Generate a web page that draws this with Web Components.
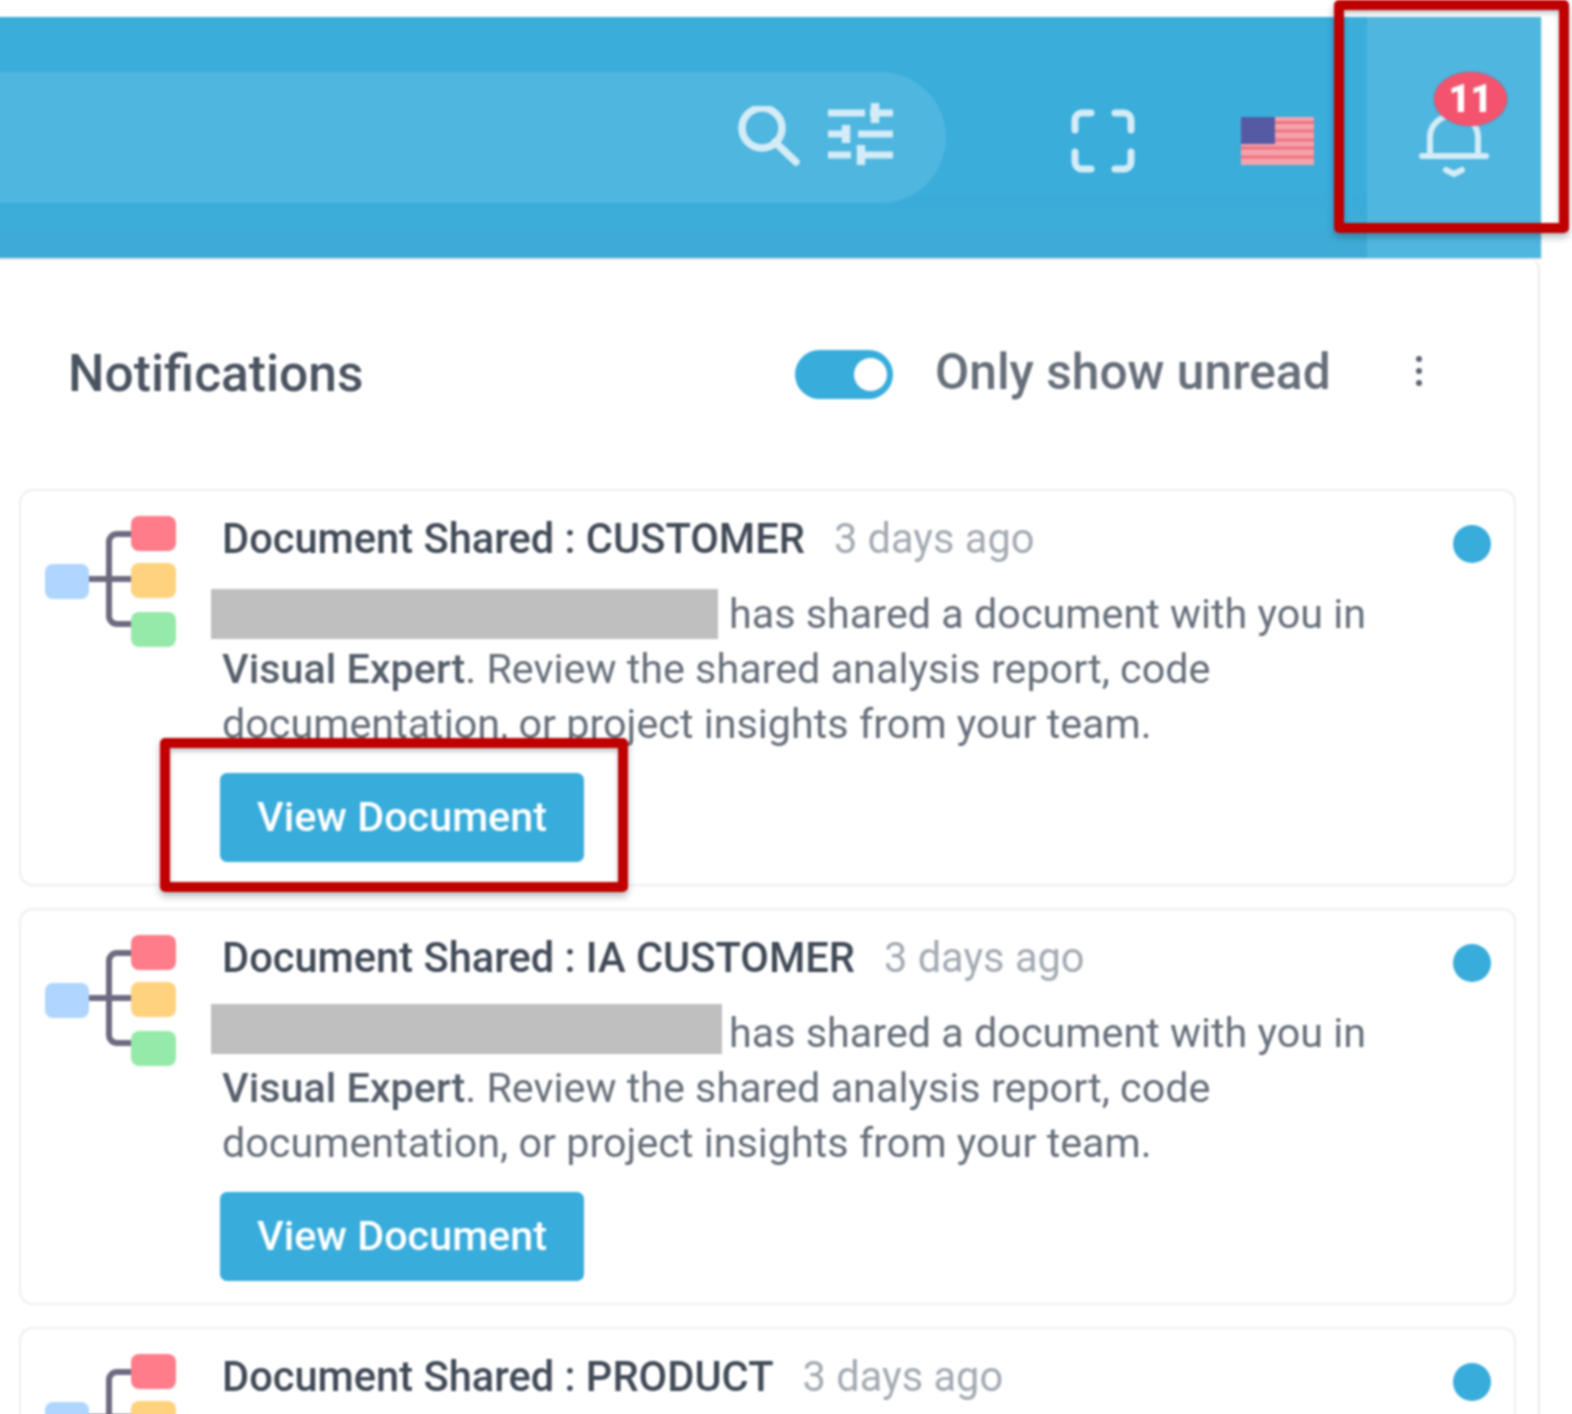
<!DOCTYPE html>
<html lang="en"><head><meta charset="utf-8"><title>Notifications</title>
<style>
html,body{margin:0;padding:0;background:#fff}
body{width:1572px;height:1414px;overflow:hidden;position:relative;font-family:Roboto,"Liberation Sans",sans-serif}
#page{filter:blur(.8px);width:1576px;height:1420px;margin-left:-4px;overflow:hidden;position:relative;padding:17px 0 0 4px;box-sizing:border-box}
</style></head><body>
<div id="page">
<top-bar></top-bar>
<notif-panel>
<notif-card title-text="Document Shared : CUSTOMER" redact="507" lift="0"></notif-card>
<notif-card title-text="Document Shared : IA CUSTOMER" redact="511" lift="4"></notif-card>
<notif-card title-text="Document Shared : PRODUCT" redact="507" lift="0"></notif-card>
</notif-panel>
<mark-box style="left:1338px;top:0;width:235px;height:233px"></mark-box>
<mark-box style="left:164px;top:738px;width:468px;height:154px"></mark-box>
</div>
<script>
function def(name,html,init){customElements.define(name,class extends HTMLElement{constructor(){super();this.attachShadow({mode:'open'}).innerHTML=html;}connectedCallback(){if(init)init(this)}})}
const ic='fill="none" stroke="#d3ecf7" stroke-linecap="round"';
def('top-bar',`<style>
:host{display:flex;align-items:center;box-sizing:border-box;height:241px;background:linear-gradient(#3aaddb,#3aaddb 70%,#3fabd6);box-shadow:0 1px 2px rgba(90,120,140,.3);margin-left:-4px;padding-left:4px;width:1545px}
.pill{height:131px;box-sizing:border-box;background:#4fb6df;border-radius:0 66px 66px 0;display:flex;align-items:center;justify-content:flex-end;padding-right:53px;gap:28px;flex:none;margin-left:-4px;width:950px}
svg{display:block;flex:none}
.s{margin-bottom:3px}.t{margin-bottom:7px}
.full{margin-left:125px;margin-top:7px}.flag{margin-left:106px;margin-top:6px}
.bell{margin-left:53px;width:174px;align-self:stretch;background:#4fb6df;position:relative;display:flex;align-items:center;justify-content:center}
.bell svg{position:relative;top:7px}
.badge{position:absolute;left:67px;top:55px;width:73px;height:54px;border-radius:50%;background:#f4536e;color:#fff;font:900 38px/54px Roboto,sans-serif;text-align:center;box-shadow:0 0 2px rgba(120,60,80,.6)}
</style>
<div class="pill">
<svg class="s" width="62" height="60" viewBox="0 0 62 60" ${ic} stroke-width="7.5"><circle cx="24" cy="22" r="20"/><path d="M37 36 58 56"/></svg>
<svg class="t" width="65" height="62" viewBox="0 0 65 62" fill="none" stroke="#d3ecf7" stroke-width="7"><path d="M0 10H37M42 10H65M0 31H14M30 31H65M0 52H23M29 52H65"/><path d="M47 0V20M18 22V40M33 42V62" stroke-width="8.5"/></svg>
</div>
<svg class="full" width="64" height="64" viewBox="0 0 64 64" ${ic} stroke-width="7"><path d="M4 21V11a7 7 0 0 1 7-7H20M44 4H53a7 7 0 0 1 7 7V21M60 43V53a7 7 0 0 1-7 7H44M20 60H11a7 7 0 0 1-7-7V43"/></svg>
<svg class="flag" width="73" height="48" viewBox="0 0 73 48"><rect width="73" height="48" fill="#f5a3ad"/><path d="M0 5.5H73M0 14H73M0 23H73M0 31H73M0 40H73" stroke="#f0717f" stroke-width="3"/><rect width="34" height="27" fill="#565aa3"/></svg>
<div class="bell"><svg width="70" height="64" viewBox="0 0 70 64" ${ic} stroke-width="6"><path d="M11 42V24a24 22 0 0 1 48 0V42M3 43H67"/><path d="M27 57 35 61 43 57"/></svg><span class="badge">11</span></div>`);
def('notif-panel',`<style>
:host{display:block;box-sizing:border-box;width:1540px;border-right:2px solid #e9ebee;border-top-right-radius:12px;height:1200px}
.head{height:231px;display:flex;align-items:center;padding-left:68px;box-sizing:border-box;padding-bottom:2px}
h1{margin:2px 0 0;font:500 51.5px/60px Roboto,sans-serif;color:#4a5360;flex:none;width:727px}
.sw{width:98px;height:49px;border-radius:25px;background:#38acdb;position:relative;flex:none;margin-top:4px}
.sw i{position:absolute;right:6px;top:8px;width:33px;height:33px;border-radius:50%;background:#fff}
.lab{margin:0 0 2px 42px;font:500 49.7px/60px Roboto,sans-serif;color:#666e79;width:481px;flex:none;white-space:nowrap}
.keb{display:flex;flex-direction:column;gap:6px;margin-bottom:4px}
.keb i{width:6px;height:6px;border-radius:50%;background:#5b6470;display:block}
.list{display:flex;flex-direction:column;gap:22px;padding-left:19px;width:1497px}
</style>
<div class="head"><h1>Notifications</h1><div class="sw"><i></i></div><div class="lab">Only show unread</div><div class="keb"><i></i><i></i><i></i></div></div>
<div class="list"><slot></slot></div>`);
def('notif-card',`<style>
:host{display:flex;box-sizing:border-box;width:1497px;border:2px solid #eceef1;border-radius:14px;background:#fff;padding:26px 23px 22px 24px;position:relative;flex:none}
svg{display:block;flex:none;margin-right:46px;margin-top:-1px}
.c{flex:1;min-width:0}
.t{font:500 41.6px/44px Roboto,sans-serif;color:#414a57;white-space:nowrap;height:44px}
.t span{font-weight:400;color:#a3aab2;margin-left:29px}
.b{margin-top:26px;font:400 41.3px/55px Roboto,sans-serif;color:#666e79;width:1190px}
.b strong{font-weight:500;color:#555e6a}
.r{display:inline-block;height:50px;background:#bfbfbf;margin-left:-11px;vertical-align:-11px}
.btn{margin-top:21px;width:364px;height:89px;background:#38acdb;border-radius:7px;color:#fff;font:500 41.3px/89px Roboto,sans-serif;text-align:center;margin-left:-2px}
.dot{position:absolute;right:23px;top:34px;width:38px;height:38px;border-radius:50%;background:#38acdb}
</style>
<svg width="131" height="131" viewBox="0 0 131 131"><g fill="none" stroke="#6f6a80" stroke-width="6"><path d="M86 18H72a8 8 0 0 0-8 8V100a8 8 0 0 0 8 8H86M44 63H86"/></g><rect x="0" y="48" width="44" height="35" rx="8" fill="#aed6fe"/><rect x="86" y="0" width="45" height="35" rx="8" fill="#ff7c8a"/><rect x="86" y="47" width="45" height="35" rx="8" fill="#ffd27d"/><rect x="86" y="96" width="45" height="35" rx="8" fill="#96eaa9"/></svg>
<div class="c"><div class="t"><b style="font-weight:500" id="tt"></b><span>3 days ago</span></div>
<div class="b"><span class="r" id="r"></span>has shared a document with you in <strong>Visual Expert</strong>. Review the shared analysis report, code documentation, or project insights from your team.</div>
<div class="btn">View Document</div></div><div class="dot"></div>`,el=>{const s=el.shadowRoot,w=+el.getAttribute('redact');s.getElementById('tt').textContent=el.getAttribute('title-text');const r=s.getElementById('r');r.style.width=w+'px';r.style.marginRight=(518-w)+'px';r.style.transform='translateY(-'+el.getAttribute('lift')+'px)';});
def('mark-box',`<style>:host{display:block;position:absolute;box-sizing:border-box;border:10px solid #c00000;border-radius:5px;box-shadow:0 4px 7px rgba(40,50,60,.35),inset 0 3px 5px rgba(40,50,60,.3)}</style>`);
</script>
</body></html>
